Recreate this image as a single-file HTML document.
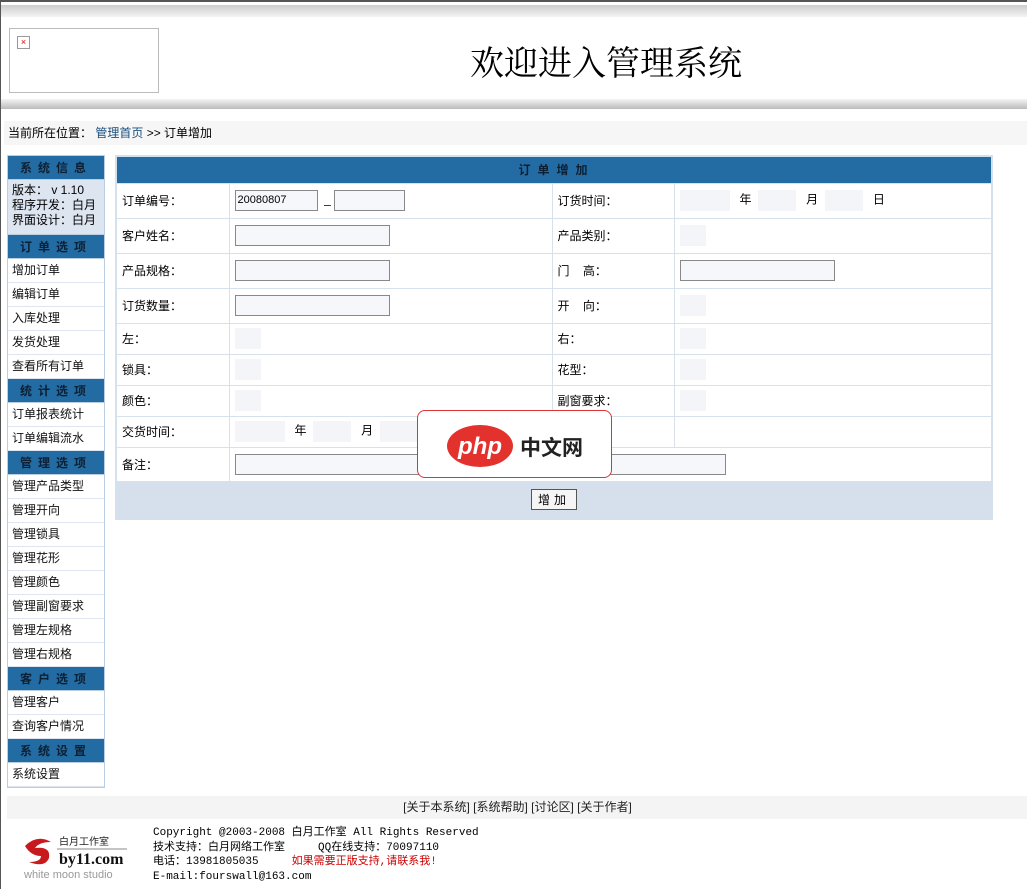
<!DOCTYPE html>
<html><head><meta charset="utf-8"><style>
*{margin:0;padding:0;box-sizing:border-box}
body{width:1027px;height:889px;background:#fff;font-family:"Liberation Sans","Noto Sans CJK SC","WenQuanYi Zen Hei",sans-serif;font-size:12px;color:#000;position:relative;overflow:hidden;border-left:1px solid #555}
.abs{position:absolute}
.topline{left:0;top:0;width:1027px;height:2px;background:#555}
.g1{left:0;top:5px;width:1027px;height:12px;background:linear-gradient(#ccc,#f4f4f4)}
.g2{left:0;top:99px;width:1027px;height:10px;background:linear-gradient(#f4f4f4,#bbb)}
.logo{left:8px;top:28px;width:150px;height:65px;border:1px solid #bbb}
.logo i{position:absolute;left:7px;top:7px;width:13px;height:13px;border:1px solid #999;font-style:normal;color:#c00;font-size:9px;line-height:11px;text-align:center}
.title{left:469px;top:36px;font-size:34px;font-family:"Noto Serif CJK SC",serif}
.crumb{left:3px;top:121px;width:1024px;height:24px;background:#f6f6f6;line-height:24px;padding-left:4px}
.crumb a{color:#1a4f7e}
.side{left:6px;top:155px;width:98px;border:1px solid #b9cde3}
.side .h{height:24px;background:#236ca3;color:#0d1f33;font-weight:bold;text-align:center;line-height:24px;letter-spacing:6px;border-bottom:1px solid #b9cde3}
.side .i{height:24px;line-height:23px;padding-left:4px;border-bottom:1px solid #dde6f0;color:#111}
.side .info{height:55px;background:#dde5f0;padding:3px 0 0 4px;line-height:15px;border-bottom:1px solid #b9cde3}
table{position:absolute;left:114px;top:155px;width:878px;border-collapse:collapse;border:2px solid #d4e0ec}
td{border:1px solid #d7e1ec;padding-left:5px;vertical-align:middle}
.th{height:27px;background:#236ca3;text-align:center;font-weight:bold;letter-spacing:7px;color:#0d1f33}
.ip{display:inline-block;height:21px;border:1px solid #888;background:#f5f7fb;vertical-align:middle;font-size:11px;line-height:19px;padding-left:2px}
.sb{display:inline-block;height:21px;background:#f3f5f9;vertical-align:middle}
.bt{display:inline-block;border:1px solid #555;background:#f5f5f5;padding:1px 6px;letter-spacing:4px}
.php{left:416px;top:410px;width:195px;height:68px;border:1px solid #d33;border-radius:8px;background:#fff}
.fbar{left:6px;top:796px;width:1021px;height:23px;background:#f4f4f4;text-align:center;line-height:23px;color:#222}
.ft{left:152px;top:826px;font-family:"Liberation Mono","Noto Sans CJK SC",monospace;font-size:11px;line-height:14.6px}
</style></head><body>
<div class="abs topline"></div><div class="abs g1"></div><div class="abs g2"></div>
<div class="abs logo"><i>×</i></div>
<div class="abs title">欢迎进入管理系统</div>
<div class="abs crumb">当前所在位置： <a>管理首页</a> &gt;&gt; 订单增加</div>
<div class="abs side">
<div class="h">系统信息</div>
<div class="info">版本： v 1.10<br>程序开发：白月<br>界面设计：白月</div>
<div class="h">订单选项</div>
<div class="i">增加订单</div><div class="i">编辑订单</div><div class="i">入库处理</div><div class="i">发货处理</div><div class="i">查看所有订单</div>
<div class="h">统计选项</div>
<div class="i">订单报表统计</div><div class="i">订单编辑流水</div>
<div class="h">管理选项</div>
<div class="i">管理产品类型</div><div class="i">管理开向</div><div class="i">管理锁具</div><div class="i">管理花形</div><div class="i">管理颜色</div><div class="i">管理副窗要求</div><div class="i">管理左规格</div><div class="i">管理右规格</div>
<div class="h">客户选项</div>
<div class="i">管理客户</div><div class="i">查询客户情况</div>
<div class="h">系统设置</div>
<div class="i">系统设置</div>
</div>
<table>
<tr><td colspan="4" class="th">订单增加</td></tr>
<tr style="height:35px"><td style="width:113px">订单编号：</td><td style="width:323px"><span class="ip" style="width:83px">20080807</span> &nbsp;_ <span class="ip" style="width:71px"></span></td><td style="width:122px">订货时间：</td><td><span class="sb" style="width:50px"></span> &nbsp; 年 &nbsp;<span class="sb" style="width:38px"></span> &nbsp; 月 &nbsp;<span class="sb" style="width:38px"></span> &nbsp; 日</td></tr>
<tr style="height:35px"><td>客户姓名：</td><td><span class="ip" style="width:155px"></span></td><td>产品类别：</td><td><span class="sb" style="width:26px"></span></td></tr>
<tr style="height:35px"><td>产品规格：</td><td><span class="ip" style="width:155px"></span></td><td>门&nbsp;&nbsp;&nbsp;&nbsp;高：</td><td><span class="ip" style="width:155px"></span></td></tr>
<tr style="height:35px"><td>订货数量：</td><td><span class="ip" style="width:155px"></span></td><td>开&nbsp;&nbsp;&nbsp;&nbsp;向：</td><td><span class="sb" style="width:26px"></span></td></tr>
<tr style="height:31px"><td>左：</td><td><span class="sb" style="width:26px"></span></td><td>右：</td><td><span class="sb" style="width:26px"></span></td></tr>
<tr style="height:31px"><td>锁具：</td><td><span class="sb" style="width:26px"></span></td><td>花型：</td><td><span class="sb" style="width:26px"></span></td></tr>
<tr style="height:31px"><td>颜色：</td><td><span class="sb" style="width:26px"></span></td><td>副窗要求：</td><td><span class="sb" style="width:26px"></span></td></tr>
<tr style="height:31px"><td>交货时间：</td><td><span class="sb" style="width:50px"></span> &nbsp; 年 &nbsp;<span class="sb" style="width:38px"></span> &nbsp; 月 &nbsp;<span class="sb" style="width:38px"></span></td><td></td><td></td></tr>
<tr style="height:34px"><td>备注：</td><td colspan="3"><span class="ip" style="width:491px"></span></td></tr>
<tr style="height:38px;background:#d6dfec"><td colspan="4" style="text-align:center;padding-left:0;border:none;padding-right:0"><span class="bt">增加</span></td></tr>
</table>
<div class="abs php">
<svg width="195" height="68" style="position:absolute;left:0;top:0">
<ellipse cx="62" cy="35" rx="33" ry="21" fill="#e3312d"/>
<text x="62" y="43" text-anchor="middle" font-family="Liberation Sans" font-style="italic" font-weight="bold" font-size="24" fill="#fff">php</text>
<text x="102" y="44" font-family="Noto Sans CJK SC" font-weight="bold" font-size="21" fill="#222">中文网</text>
</svg></div>
<div class="abs fbar">[关于本系统] [系统帮助] [讨论区] [关于作者]</div>
<div class="abs" style="left:20px;top:832px;width:110px;height:50px">
<svg width="110" height="50"><path d="M4 14 Q16 2 30 10 Q18 10 14 16 Q30 14 28 26 Q24 36 8 30 Q20 30 20 24 Q10 24 4 14Z" fill="#c8191c"/>
<text x="38" y="13" font-family="Noto Sans CJK SC" font-size="10" fill="#222">白月工作室</text>
<line x1="36" y1="17" x2="106" y2="17" stroke="#888"/>
<text x="38" y="32" font-family="Liberation Serif" font-weight="bold" font-size="16" fill="#111">by11.com</text>
<text x="3" y="46" font-family="Liberation Sans" font-size="11" fill="#999">white moon studio</text></svg></div>
<div class="abs ft">Copyright @2003-2008 白月工作室 All Rights Reserved<br>技术支持：白月网络工作室&nbsp;&nbsp;&nbsp;&nbsp; QQ在线支持：70097110<br>电话：13981805035&nbsp;&nbsp;&nbsp;&nbsp; <span style="color:#c00">如果需要正版支持,请联系我!</span><br>E-mail:fourswall@163.com</div>
</body></html>
